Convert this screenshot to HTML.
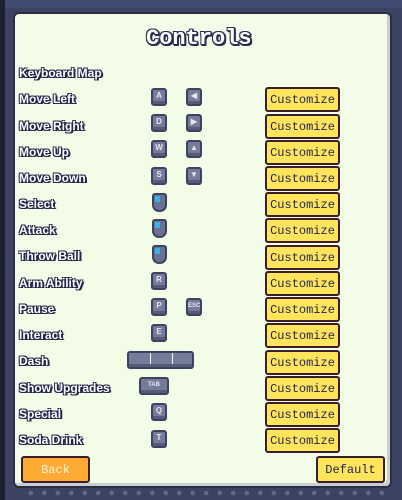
<!DOCTYPE html>
<html><head><meta charset="utf-8"><style>
*{margin:0;padding:0;box-sizing:border-box}
body{width:402px;height:500px;overflow:hidden;background:#3b4262;position:relative;font-family:"Liberation Mono","DejaVu Sans Mono",monospace}
.edge{position:absolute;left:0;top:0;width:5px;height:500px;background:#1c2030}
.top{position:absolute;left:0;top:0;width:402px;height:8px;background:#414a70}
.panel{position:absolute;left:13px;top:12px;width:379px;height:476px;background:#f3fce6;border:2px solid #2a2f45;border-radius:6px;box-shadow:inset -3px -3px 0 #c9cfd0}
.title{position:absolute;left:146px;top:26px;font:bold 22px "Liberation Mono",monospace;color:#fff;letter-spacing:0px;text-shadow:2px 2px 0 #2a2b55,-1px -1px 0 #2a2b55,1px -1px 0 #2a2b55,-1px 1px 0 #2a2b55,2px 0 0 #2a2b55,0 2px 0 #2a2b55}
.lbl{position:absolute;left:19px;font:bold 12px "Liberation Sans",sans-serif;color:#fff;text-shadow:1px 1px 0 #22264a,-1px -1px 0 #22264a,1px -1px 0 #22264a,-1px 1px 0 #22264a,2px 1px 0 #22264a}
.btn{position:absolute;left:265px;width:75px;height:25px;background:#ffe45c;border:2px solid #3a1f2a;border-radius:3px;font:12px "Liberation Mono",monospace;color:#1e2250;text-align:center;line-height:22px}
.key{position:absolute;width:16px;height:18px;background:#747c99;border:2px solid #3d4260;border-radius:3px;box-shadow:inset 0 -3px 0 #565c78;color:#e6e8f0;font:bold 8px "Liberation Sans",sans-serif;text-align:center;line-height:12px}
.mouse{position:absolute;width:15px;height:19px;background:#6a7292;border:2px solid #3d4260;border-radius:3px 3px 7px 7px}
.mouse:before{content:"";position:absolute;left:1px;top:1px;width:5px;height:6px;background:#3ab2e6}
.dots{position:absolute;top:490px;left:24px;width:360px;height:6px;background:radial-gradient(circle,#606a8c 2px,transparent 2.5px) 0 0/13.5px 6px repeat-x}
</style></head><body>
<div class="top"></div><div class="edge"></div>
<div class="panel"></div>
<div class="title">Controls</div>
<div class="lbl" style="top:66px">Keyboard Map</div>
<div class="lbl" style="top:92px">Move Left</div>
<div class="lbl" style="top:119px">Move Right</div>
<div class="lbl" style="top:145px">Move Up</div>
<div class="lbl" style="top:171px">Move Down</div>
<div class="lbl" style="top:197px">Select</div>
<div class="lbl" style="top:223px">Attack</div>
<div class="lbl" style="top:249px">Throw Ball</div>
<div class="lbl" style="top:276px">Arm Ability</div>
<div class="lbl" style="top:302px">Pause</div>
<div class="lbl" style="top:328px">Interact</div>
<div class="lbl" style="top:354px">Dash</div>
<div class="lbl" style="top:381px">Show Upgrades</div>
<div class="lbl" style="top:407px">Special</div>
<div class="lbl" style="top:433px">Soda Drink</div>

<div class="key" style="left:151px;top:88px">A</div><div class="key" style="left:186px;top:88px">&#9664;</div>
<div class="key" style="left:151px;top:114px">D</div><div class="key" style="left:186px;top:114px">&#9654;</div>
<div class="key" style="left:151px;top:140px">W</div><div class="key" style="left:186px;top:140px">&#9650;</div>
<div class="key" style="left:151px;top:167px">S</div><div class="key" style="left:186px;top:167px">&#9660;</div>
<div class="mouse" style="left:152px;top:193px"></div>
<div class="mouse" style="left:152px;top:219px"></div>
<div class="mouse" style="left:152px;top:245px"></div>
<div class="key" style="left:151px;top:272px">R</div>
<div class="key" style="left:151px;top:298px">P</div><div class="key" style="left:186px;top:298px;font-size:6px">ESC</div>
<div class="key" style="left:151px;top:324px">E</div>
<div class="key" style="left:127px;top:351px;width:67px;background:linear-gradient(90deg,#747c99 21px,#f3fce6 21px 22px,#747c99 22px 43px,#f3fce6 43px 44px,#747c99 44px)"></div>
<div class="key" style="left:139px;top:377px;width:30px;font-size:6px">TAB</div>
<div class="key" style="left:151px;top:403px">Q</div>
<div class="key" style="left:151px;top:430px">T</div>

<div class="btn" style="top:87px">Customize</div>
<div class="btn" style="top:114px">Customize</div>
<div class="btn" style="top:140px">Customize</div>
<div class="btn" style="top:166px">Customize</div>
<div class="btn" style="top:192px">Customize</div>
<div class="btn" style="top:218px">Customize</div>
<div class="btn" style="top:245px">Customize</div>
<div class="btn" style="top:271px">Customize</div>
<div class="btn" style="top:297px">Customize</div>
<div class="btn" style="top:323px">Customize</div>
<div class="btn" style="top:350px">Customize</div>
<div class="btn" style="top:376px">Customize</div>
<div class="btn" style="top:402px">Customize</div>
<div class="btn" style="top:428px">Customize</div>

<div class="btn" style="left:21px;top:456px;width:69px;height:27px;background:#fdab32;color:#fff3d8;line-height:24px">Back</div>
<div class="btn" style="left:316px;top:456px;width:69px;height:27px;line-height:24px">Default</div>
<div class="dots"></div>
</body></html>
